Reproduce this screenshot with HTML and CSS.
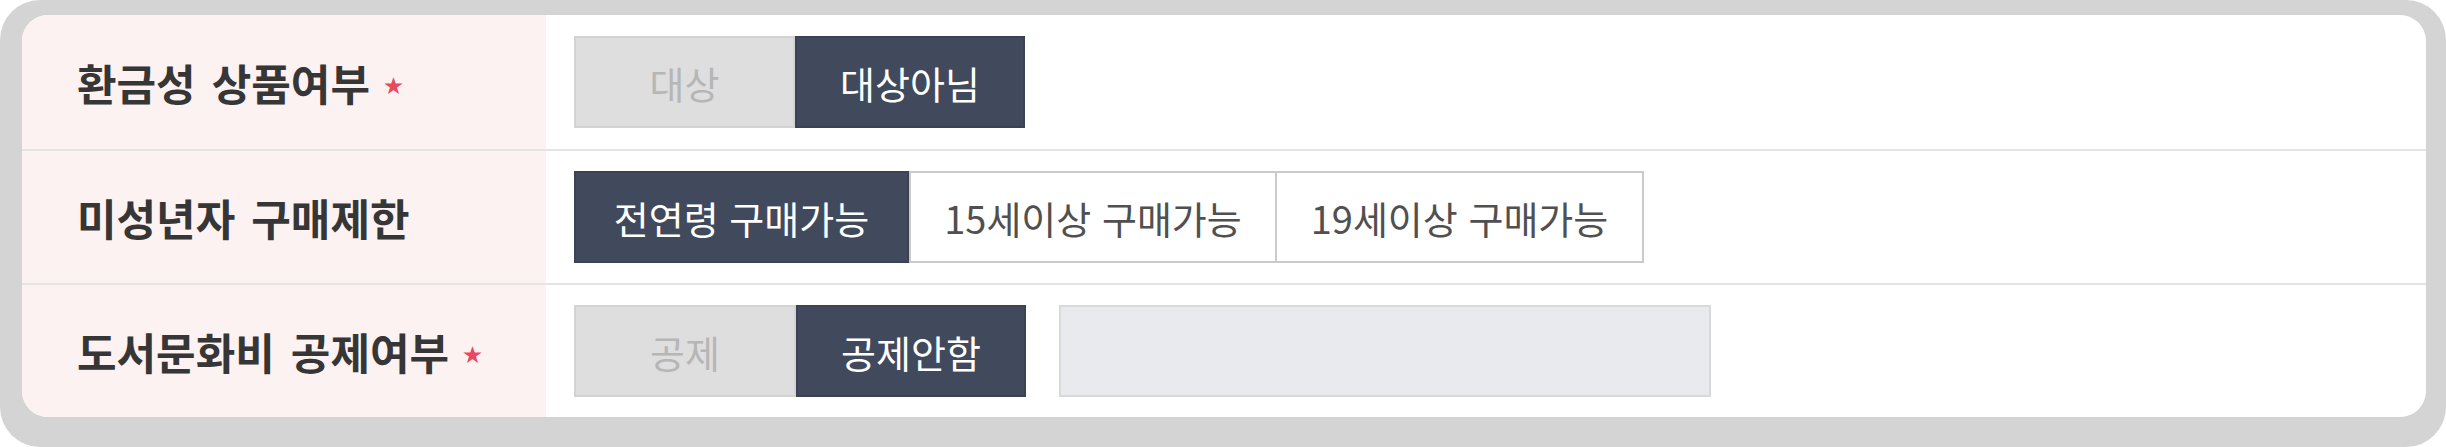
FILE: index.html
```html
<!DOCTYPE html>
<html lang="ko">
<head>
<meta charset="utf-8">
<title>상품 설정</title>
<link rel="stylesheet" href="styles.css">
</head>
<body>
<div class="frame">
  <div class="card">
    <div class="row">
      <div class="label">환금성 상품여부<span class="req">★</span></div>
      <div class="field">
        <div class="seg">
          <button type="button" class="opt opt-off w-221">대상</button>
          <button type="button" class="opt opt-on w-230">대상아님</button>
        </div>
      </div>
    </div>
    <div class="row">
      <div class="label">미성년자 구매제한</div>
      <div class="field">
        <div class="seg">
          <button type="button" class="opt opt-on w-335">전연령 구매가능</button>
          <button type="button" class="opt opt-line w-368">15세이상 구매가능</button>
          <button type="button" class="opt opt-line w-367">19세이상 구매가능</button>
        </div>
      </div>
    </div>
    <div class="row">
      <div class="label">도서문화비 공제여부<span class="req">★</span></div>
      <div class="field">
        <div class="seg">
          <button type="button" class="opt opt-off w-222">공제</button>
          <button type="button" class="opt opt-on w-230">공제안함</button>
        </div>
        <div class="input-box"></div>
      </div>
    </div>
  </div>
</div>
</body>
</html>
```

FILE: styles.css
```css
html, body {
  margin: 0;
  padding: 0;
  background: #ffffff;
}

body {
  width: 2446px;
  height: 447px;
  overflow: hidden;
  font-family: "Noto Sans CJK KR", "Noto Sans", sans-serif;
}

.frame {
  box-sizing: border-box;
  width: 2446px;
  height: 447px;
  background: #d4d4d4;
  border-radius: 40px;
  padding: 15px 20px 30px 22px;
}

.card {
  height: 402px;
  background: #ffffff;
  border-radius: 26px;
  overflow: hidden;
  display: flex;
  flex-direction: column;
}

.row {
  height: 134px;
  box-sizing: border-box;
  display: flex;
  flex: none;
}

.row + .row {
  border-top: 2px solid #e4e4e4;
}

.label {
  width: 524px;
  flex: none;
  box-sizing: border-box;
  background: #fdf2f2;
  display: flex;
  align-items: center;
  padding-left: 55px;
  font-size: 43px;
  font-weight: 700;
  word-spacing: 4px;
  color: #363636;
  white-space: nowrap;
}

.req {
  color: #e9485f;
  font-size: 19px;
  margin-left: 14px;
  margin-top: 4px;
}

.field {
  flex: 1;
  display: flex;
  align-items: center;
  padding-left: 28px;
  gap: 33px;
}

.seg {
  display: flex;
}

.opt {
  height: 92px;
  box-sizing: border-box;
  margin: 0;
  padding: 0;
  font-family: inherit;
  font-size: 38px;
  font-weight: 400;
  display: flex;
  align-items: center;
  justify-content: center;
  border: 2px solid transparent;
  white-space: nowrap;
}

.opt-off {
  background: #dedede;
  border-color: #d3d3d3;
  color: #b6b6b6;
}

.opt-on {
  background: #414a5c;
  border-color: #3a4253;
  color: #ffffff;
}

.opt-line {
  background: #ffffff;
  border-color: #cacaca;
  color: #505050;
}

.opt-line + .opt-line {
  border-left: 0;
}

.w-221 { width: 221px; }
.w-222 { width: 222px; }
.w-230 { width: 230px; }
.w-335 { width: 335px; }
.w-368 { width: 368px; }
.w-367 { width: 367px; }

.input-box {
  width: 652px;
  height: 92px;
  box-sizing: border-box;
  background: #e8eaed;
  border: 2px solid #d7d9dc;
}
```
